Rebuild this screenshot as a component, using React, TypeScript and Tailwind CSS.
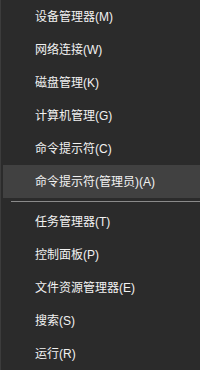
const top = [
  "设备管理器(M)",
  "网络连接(W)",
  "磁盘管理(K)",
  "计算机管理(G)",
  "命令提示符(C)",
  "命令提示符(管理员)(A)",
];

const bottom = ["任务管理器(T)", "控制面板(P)", "文件资源管理器(E)", "搜索(S)", "运行(R)"];

function Item({ label, active }: { label: string; active?: boolean }) {
  return (
    <div
      className={`flex h-[33px] items-center pl-[32px] text-[12px] text-[#f2f2f2] ${
        active ? "bg-[#414141]" : ""
      }`}
    >
      {label}
    </div>
  );
}

export default function App() {
  return (
    <div
      className="flex h-[370px] w-[200px] overflow-hidden bg-[#2b2b2b]"
      style={{ fontFamily: '"Liberation Sans", "Noto Sans CJK SC", sans-serif' }}
    >
      <div className="w-[1px] bg-[#3c3c3c]" />
      <div className="flex flex-1 flex-col pl-[2px]">
        {top.map((l, i) => (
          <Item key={l} label={l} active={i === 5} />
        ))}
        <div className="flex h-[7px] items-center pl-[8px]">
          <div className="h-[1px] flex-1 bg-[#8a8a8a]" />
        </div>
        {bottom.map((l) => (
          <Item key={l} label={l} />
        ))}
      </div>
    </div>
  );
}
